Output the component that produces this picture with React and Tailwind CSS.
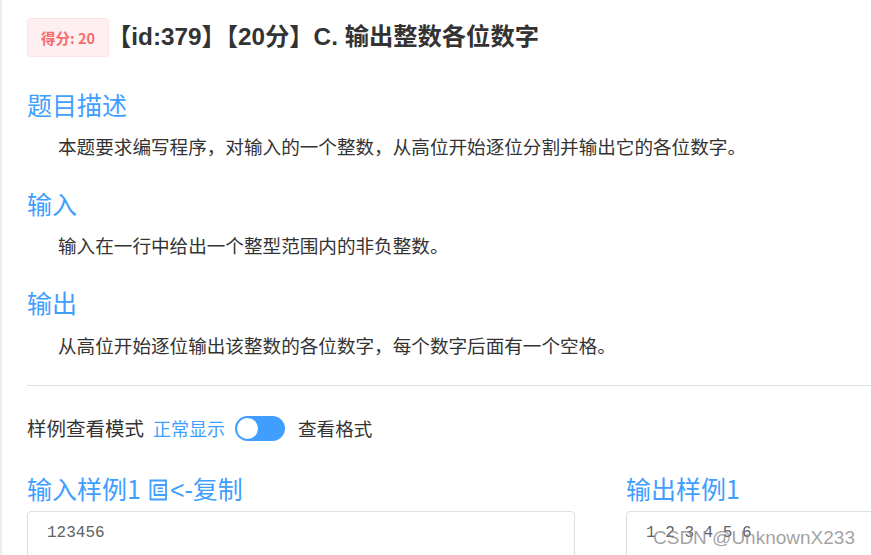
import React from "react";

const cjk = { fontFamily: '"Noto Sans CJK SC", sans-serif' };
const title = { fontFamily: '"Liberation Sans", "Noto Sans CJK SC", sans-serif' };
const mono = { fontFamily: '"Liberation Mono", monospace' };

function CopyIcon() {
  return (
    <svg width="19" height="22" viewBox="0 0 19 22" fill="none" stroke="#409eff" strokeWidth="1.8" className="inline-block ml-[8px] mr-[2px] align-middle -mt-[4px]">
      <path d="M1.5 1.5 H17 V20.5 H1.5 Z" />
      <path d="M5.5 6 H17 M5.5 6 V16 H17" />
      <path d="M8.5 9.2 H14 M8.5 12.6 H14" strokeWidth="1.5" />
    </svg>
  );
}

function Heading({ children, className = "" }) {
  return (
    <div className={"text-[25px] leading-[36px] h-[36px] text-[#409eff] whitespace-nowrap " + className} style={cjk}>
      {children}
    </div>
  );
}

function Para({ children, className = "" }) {
  return (
    <div className={"text-[18.6px] leading-[28px] text-[#333] pl-[31px] whitespace-nowrap " + className} style={cjk}>
      {children}
    </div>
  );
}

export default function App() {
  return (
    <div className="w-[871px] h-[555px] overflow-hidden bg-white flex">
      <div className="w-[2px] shrink-0 bg-[#ececec]" />
      <div className="flex-1 pl-[25px] min-w-0">
        <div className="flex items-center mt-[18px] h-[39px]">
          <div
            className="h-[39px] w-[82px] rounded-[4px] bg-[#fef0f0] border border-[#fde2e2] text-[#f56c6c] font-bold text-[14.5px] flex items-center justify-center whitespace-nowrap"
            style={cjk}
          >
            得分: 20
          </div>
          <div className="-ml-[2px] text-[24.3px] font-bold text-[#333] whitespace-nowrap" style={title}>
            【id:379】【20分】C. 输出整数各位数字
          </div>
        </div>

        <Heading className="mt-[29px]">题目描述</Heading>
        <Para className="mt-[10px]">本题要求编写程序，对输入的一个整数，从高位开始逐位分割并输出它的各位数字。</Para>

        <Heading className="mt-[25px]">输入</Heading>
        <Para className="mt-[10px]">输入在一行中给出一个整型范围内的非负整数。</Para>

        <Heading className="mt-[25px]">输出</Heading>
        <Para className="mt-[11px]">从高位开始逐位输出该整数的各位数字，每个数字后面有一个空格。</Para>

        <div className="mt-[26px] h-px bg-[#dcdfe6]" />

        <div className="mt-[28px] h-[28px] flex items-center whitespace-nowrap" style={cjk}>
          <span className="text-[#333] text-[19.5px]">样例查看模式</span>
          <span className="ml-[9px] text-[#409eff] text-[18px]">正常显示</span>
          <span className="ml-[10px] w-[50px] h-[25px] rounded-full bg-[#409eff] relative inline-block">
            <span className="absolute left-[2px] top-[2px] w-[21px] h-[21px] rounded-full bg-white" />
          </span>
          <span className="ml-[13px] text-[#333] text-[18.6px]">查看格式</span>
        </div>

        <div className="mt-[28px] flex gap-[51px]">
          <div className="w-[548px] shrink-0">
            <Heading>
              输入样例1<CopyIcon />
              <span style={{ fontFamily: '"Liberation Sans", sans-serif' }}>&lt;-</span>复制
            </Heading>
            <div className="mt-[5px] h-[60px] border border-[#dcdfe6] rounded-[4px] pl-[19px] pt-[11px]">
              <div className="text-[16px] leading-[20px] text-[#606266]" style={mono}>123456</div>
            </div>
          </div>
          <div className="w-[548px] shrink-0">
            <Heading>输出样例1</Heading>
            <div className="mt-[5px] h-[60px] border border-[#dcdfe6] rounded-[4px] pl-[19px] pt-[11px] relative">
              <div className="text-[16px] leading-[20px] text-[#606266] whitespace-pre" style={mono}>1 2 3 4 5 6 </div>
              <div
                className="absolute left-[26px] top-[15px] text-[19px] leading-[22px] text-[#8a8a8a]/80 whitespace-nowrap"
                style={{ fontFamily: '"Liberation Sans", sans-serif' }}
              >
                CSDN @UnknownX233
              </div>
            </div>
          </div>
        </div>
      </div>
    </div>
  );
}
